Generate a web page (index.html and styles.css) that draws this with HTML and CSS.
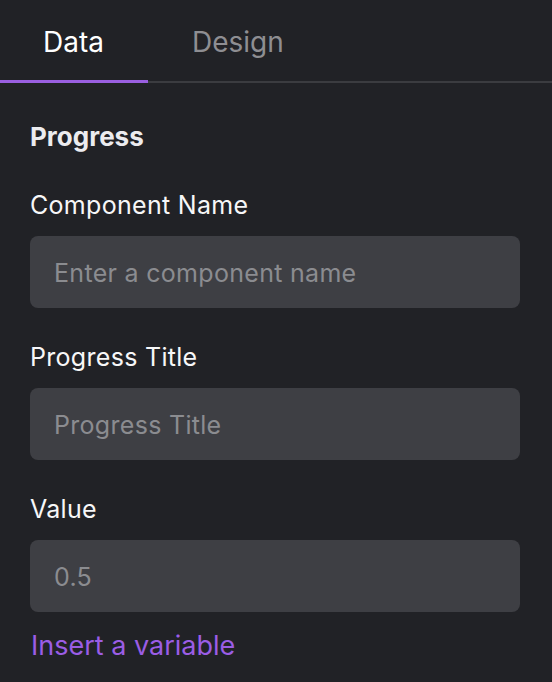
FILE: index.html
```html
<!DOCTYPE html>
<html>
<head>
<meta charset="utf-8">
<link rel="stylesheet" href="styles.css">
</head>
<body>
<div class="panel">
  <div class="tabs">
    <div class="tab active">Data</div>
    <div class="tab">Design</div>
  </div>
  <div class="content">
    <h2 class="heading">Progress</h2>
    <div class="field">
      <label class="label">Component Name</label>
      <div class="input placeholder">Enter a component name</div>
    </div>
    <div class="field">
      <label class="label">Progress Title</label>
      <div class="input placeholder">Progress Title</div>
    </div>
    <div class="field last">
      <label class="label">Value</label>
      <div class="input placeholder">0.5</div>
    </div>
    <a class="link">Insert a variable</a>
  </div>
</div>
</body>
</html>
```
FILE: styles.css
```css
html, body {
  margin: 0;
  padding: 0;
  background: #212226;
  height: 100%;
}
body {
  font-family: Inter, "Noto Sans", sans-serif;
  font-size: 25px;
  line-height: 32px;
  letter-spacing: 0.3px;
  color: #f4f4f5;
}
.panel {
  width: 552px;
}
.tabs {
  display: flex;
  border-bottom: 2px solid #3b3c40;
}
.tab {
  font-size: 28px;
  letter-spacing: 0;
  padding: 26px 44px 22px 44px;
  border-bottom: 3px solid transparent;
  margin-bottom: -2px;
  color: #8e8e92;
}
.tab.active {
  color: #ffffff;
  border-bottom-color: #9a5fe0;
  padding-left: 43px;
  padding-right: 44px;
}
.content {
  padding: 38px 32px 0 30px;
}
.heading {
  margin: 0 0 36px;
  font-size: 26px;
  line-height: 32px;
  letter-spacing: 0;
  font-weight: 700;
  color: #ececef;
}
.field {
  display: flex;
  flex-direction: column;
  margin-bottom: 33px;
}
.field.last {
  margin-bottom: 18px;
}
.label {
  display: block;
  margin-bottom: 15px;
  color: #f7f7f8;
}
.input {
  height: 72px;
  box-sizing: border-box;
  padding: 21px 24px 19px;
  background: #3e3f44;
  border-radius: 8px;
}
.placeholder {
  color: #8b8c90;
}
.link {
  display: block;
  font-size: 27px;
  letter-spacing: 0;
  padding-left: 1px;
  color: #9b5de5;
}
```
